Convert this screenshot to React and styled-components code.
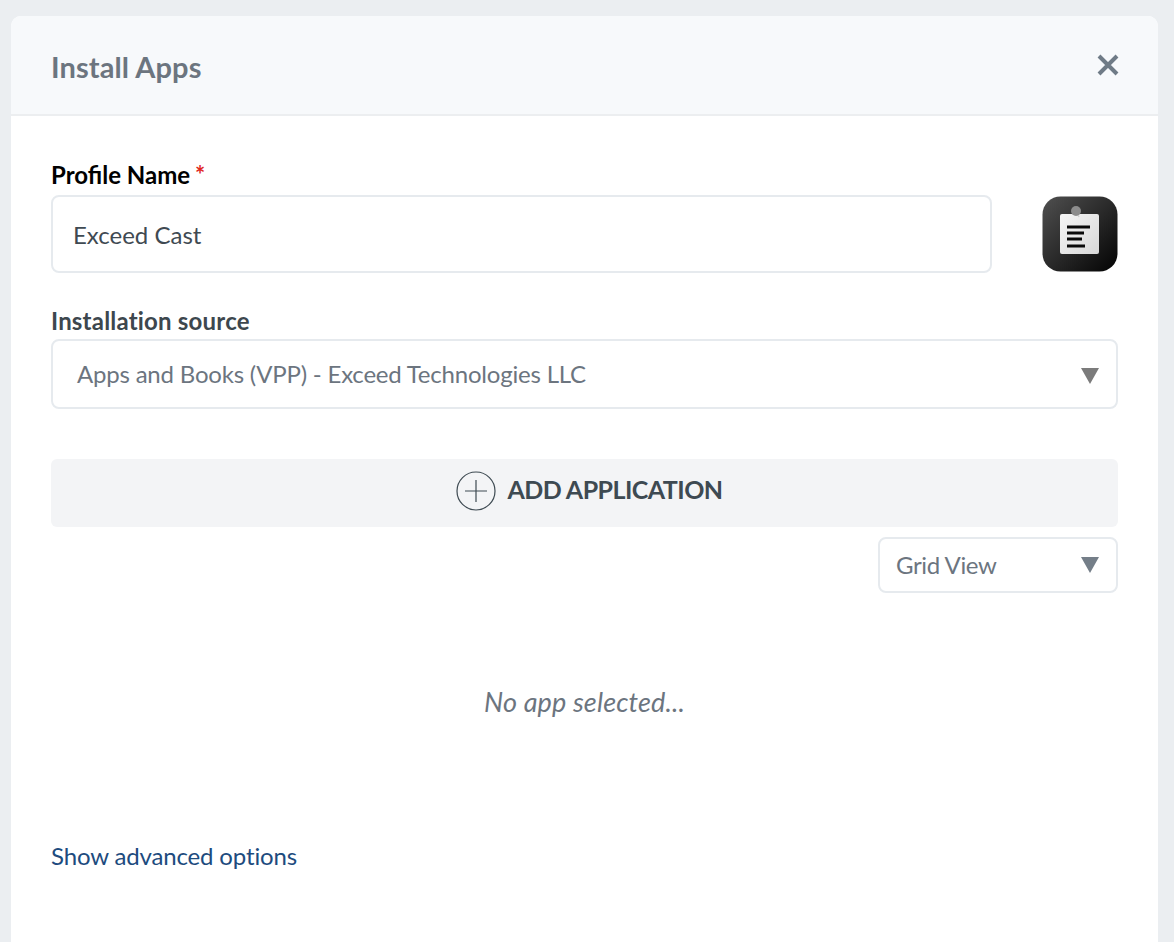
import React from "react";
import styled, { createGlobalStyle } from "styled-components";

const GlobalStyle = createGlobalStyle`
  html, body {
    margin: 0;
    padding: 0;
    background: #ebeef1;
    font-family: Lato, "Liberation Sans", sans-serif;
    overflow: hidden;
  }
`;

const Page = styled.div`
  height: 942px;
  padding: 16px 16px 0 11px;
  box-sizing: border-box;
`;

const Modal = styled.div`
  height: 926px;
  background: #ffffff;
  border-radius: 10px 10px 0 0;
  overflow: hidden;
`;

const Header = styled.div`
  height: 98px;
  padding: 0 40px;
  display: flex;
  align-items: center;
  justify-content: space-between;
  background: #f7f9fb;
  border-bottom: 2px solid #eceef0;
`;

const Title = styled.h2`
  margin: 2px 0 0;
  font-size: 29px;
  font-weight: 700;
  letter-spacing: 0.1px;
  color: #6c757f;
`;

const Close = styled.button`
  display: flex;
  margin: 0 -2px 0 0;
  padding: 0;
  border: none;
  background: none;
`;

const Body = styled.div`
  padding: 45px 40px 0;
`;

const Label = styled.label`
  display: block;
  font-size: 24px;
  line-height: 28px;
  font-weight: 700;
  letter-spacing: ${(p) => p.$spacing || 0}px;
  color: ${(p) => p.$color || "#3d474e"};
`;

const Required = styled.span`
  color: #e0281f;
  font-weight: 700;
  margin-left: 5px;
`;

const NameRow = styled.div`
  display: flex;
  align-items: center;
  justify-content: space-between;
  margin: 6px 0 34px;
`;

const Field = styled.div`
  box-sizing: border-box;
  display: flex;
  align-items: center;
  justify-content: space-between;
  width: ${(p) => p.$width || "100%"};
  height: ${(p) => p.$height}px;
  padding: 0 17px ${(p) => p.$bottom ?? 2}px ${(p) => p.$left}px;
  background: #fff;
  border: 2px solid #e6eaee;
  border-radius: 8px;
  font-size: ${(p) => p.$size || 24}px;
  letter-spacing: ${(p) => p.$spacing || 0}px;
  color: ${(p) => p.$color || "#6c757f"};
`;

const Source = styled.div`
  margin-top: 4px;
`;

const Arrow = styled.span`
  width: 0;
  height: 0;
  margin-top: ${(p) => p.$top || 0}px;
  border-left: 9px solid transparent;
  border-right: 9px solid transparent;
  border-top: 16px solid ${(p) => p.$color};
`;

const AddButton = styled.button`
  width: 100%;
  height: 68px;
  margin-top: 50px;
  padding: 0 0 0 10px;
  display: flex;
  align-items: center;
  justify-content: center;
  gap: 11px;
  border: none;
  border-radius: 6px;
  background: #f3f4f6;
  color: #3e4a52;
  font-family: inherit;
  font-size: 25px;
  font-weight: 700;
  letter-spacing: -0.55px;
`;

const AddLabel = styled.span`
  margin-bottom: 8px;
`;

const AddIcon = styled.svg`
  margin-bottom: 4px;
`;

const ViewRow = styled.div`
  display: flex;
  justify-content: flex-end;
  margin-top: 10px;
`;

const Empty = styled.p`
  margin: 89px 0 0;
  text-align: center;
  font-size: 27px;
  line-height: 40px;
  font-style: italic;
  letter-spacing: 0.15px;
  color: #6c757f;
`;

const Advanced = styled.a`
  display: block;
  margin-top: 119px;
  font-size: 24px;
  line-height: 30px;
  letter-spacing: -0.15px;
  color: #1d4b7e;
`;

const AppIcon = () => (
  <svg width="76" height="76" viewBox="0 0 76 76">
    <defs>
      <linearGradient id="tile" x1="0" y1="0" x2="1" y2="1">
        <stop offset="0" stopColor="#505050" />
        <stop offset="1" stopColor="#030303" />
      </linearGradient>
      <linearGradient id="paper" x1="0" y1="0" x2="1" y2="1">
        <stop offset="0" stopColor="#f6f6f6" />
        <stop offset="1" stopColor="#d8d8d8" />
      </linearGradient>
    </defs>
    <rect x="0.5" y="0.5" width="75" height="75" rx="18" fill="url(#tile)" />
    <rect x="18" y="18" width="39" height="40" rx="2" fill="url(#paper)" />
    <path d="M34 15l3 6" stroke="#d0d0d0" strokeWidth="1.5" fill="none" />
    <circle cx="34" cy="15" r="5" fill="#8c8c8c" />
    <path d="M25 31h23M25 37h17M25 43h15M25 50h18" stroke="#0a0a0a" strokeWidth="3" fill="none" />
  </svg>
);

const App = () => (
  <>
    <GlobalStyle />
    <Page>
      <Modal>
        <Header>
          <Title>Install Apps</Title>
          <Close>
            <svg width="24" height="24" viewBox="0 0 24 24">
              <path d="M3 3l18 18M21 3L3 21" stroke="#6f7b86" strokeWidth="4" fill="none" />
            </svg>
          </Close>
        </Header>
        <Body>
          <Label $color="#000">
            Profile Name<Required>*</Required>
          </Label>
          <NameRow>
            <Field $width="941px" $height={78} $left={20} $bottom={0} $color="#3f4a52">
              Exceed Cast
            </Field>
            <AppIcon />
          </NameRow>
          <Label $spacing={0.2}>Installation source</Label>
          <Source>
            <Field $height={70} $left={24} $spacing={-0.2}>
              Apps and Books (VPP) - Exceed Technologies LLC
              <Arrow $color="#7b7b7b" $top={6} />
            </Field>
          </Source>
          <AddButton>
            <AddIcon width="40" height="40" viewBox="0 0 40 40">
              <circle cx="20" cy="20" r="19" fill="none" stroke="#3e4a52" strokeWidth="1.2" />
              <path d="M20 9v22M9 20h22" stroke="#3e4a52" strokeWidth="1.2" fill="none" />
            </AddIcon>
            <AddLabel>ADD APPLICATION</AddLabel>
          </AddButton>
          <ViewRow>
            <Field $width="240px" $height={56} $left={16} $spacing={-0.4}>
              Grid View
              <Arrow $color="#747e88" $top={2} />
            </Field>
          </ViewRow>
          <Empty>No app selected...</Empty>
          <Advanced>Show advanced options</Advanced>
        </Body>
      </Modal>
    </Page>
  </>
);

export default App;
